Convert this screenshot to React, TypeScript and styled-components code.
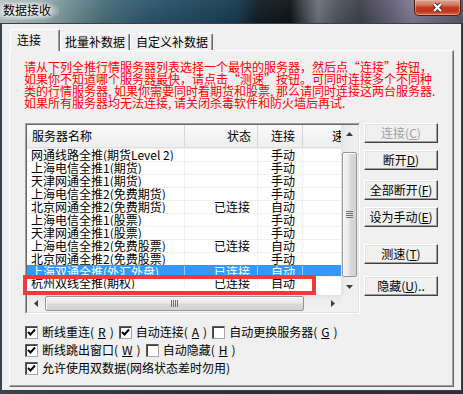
import React from 'react';
import styled, { createGlobalStyle } from 'styled-components';

const FONT = `"Noto Sans CJK SC", "Noto Sans", "Liberation Sans", sans-serif`;

const GlobalStyle = createGlobalStyle`
  html, body { margin: 0; padding: 0; }
  body { background: #27323b; font-family: ${FONT}; font-size: 12px; overflow: hidden; }
  *, *::before, *::after { box-sizing: border-box; }
`;

const Window = styled.div`
  width: 463px;
  height: 394px;
  display: flex;
  flex-direction: column;
  background: linear-gradient(90deg, #3a4650 0%, #27323b 40%, #2c2f38 100%);
`;

const TitleBar = styled.div`
  flex: 0 0 23px;
  display: flex;
  justify-content: space-between;
  align-items: flex-start;
  background:
    linear-gradient(180deg, rgba(255,255,255,0.06), rgba(0,0,0,0.06)),
    linear-gradient(90deg, #b3c0c0 0px, #9aafb0 40px, #6f8d92 70px, #456b78 105px, #2b536b 150px, #1d4459 200px, #163a50 235px, #101c25 258px, #0c1217 290px, #3a4149 303px, #6b7179 318px, #4c525a 338px, #3c3e48 360px, #66627a 395px, #7e7890 412px, #585466 463px);
`;

const Title = styled.div`
  margin-top: 2px;
  padding: 1px 8px 3px 3px;
  line-height: 14px;
  font-size: 12px;
  color: #000;
  background: radial-gradient(ellipse at 40% 50%, rgba(226,232,232,0.95) 0%, rgba(210,220,220,0.6) 55%, rgba(200,210,210,0) 80%);
  text-shadow: 0 0 3px #fff, 0 0 6px rgba(255,255,255,0.9);
`;

const CloseButton = styled.div`
  width: 47px;
  height: 16px;
  margin-right: 2px;
  border: 1px solid #4a1d15;
  border-top: none;
  border-radius: 0 0 5px 5px;
  background: linear-gradient(180deg, #d9a697 0%, #d27d66 30%, #c33c20 50%, #bd3518 75%, #d8694a 100%);
  box-shadow: inset 0 0 0 1px rgba(255, 200, 190, 0.45);
  display: flex;
  align-items: center;
  justify-content: center;
`;

const Client = styled.div`
  flex: 1;
  margin: 0 1px 3px 1px;
  border: 1px solid #3a4046;
  background: #f0f0f0;
  display: flex;
  flex-direction: column;
`;

const TabStrip = styled.div`
  flex: 0 0 26px;
  display: flex;
  align-items: flex-end;
  padding-left: 8px;
`;

const Tab = styled.div<{ $active?: boolean; $w: number; $pl: number }>`
  position: relative;
  z-index: 1;
  width: ${p => p.$w}px;
  height: ${p => (p.$active ? 22 : 17)}px;
  margin-bottom: ${p => (p.$active ? -1 : 0)}px;
  padding-left: ${p => p.$pl}px;
  padding-top: ${p => (p.$active ? 3 : 1)}px;
  background: #f0f0f0;
  border-top: 1px solid #fff;
  border-left: 1px solid #fff;
  border-right: 1px solid #696969;
  border-radius: 2px 2px 0 0;
  box-shadow: inset -1px 0 0 #a0a0a0;
  font-size: 12px;
  line-height: 14px;
  color: #000;
  white-space: nowrap;
`;

const Panel = styled.div`
  flex: 1;
  margin: 0 7px 3px 7px;
  border-top: 1px solid #fff;
  border-left: 1px solid #fff;
  border-right: 1px solid #696969;
  border-bottom: 1px solid #696969;
  box-shadow: inset -1px -1px 0 #a0a0a0;
  padding: 10px 0 0 14px;
  display: flex;
  flex-direction: column;
`;

const Notice = styled.div`
  color: #ff0000;
  font-size: 12px;
  line-height: 12px;
  white-space: nowrap;
`;

const ListArea = styled.div`
  margin-top: 14px;
  padding-left: 1px;
  display: flex;
  gap: 4px;
  align-items: flex-start;
`;

const ListWrap = styled.div`
  position: relative;
  width: 335px;
  height: 191px;
`;

const ListOuter = styled.div`
  width: 100%;
  height: 100%;
  border: 1px solid;
  border-color: #a0a0a0 #ffffff #ffffff #a0a0a0;
`;

const ListInner = styled.div`
  width: 100%;
  height: 100%;
  border: 1px solid;
  border-color: #696969 #e3e3e3 #e3e3e3 #696969;
  background: #fff;
  display: grid;
  grid-template-columns: 1fr 17px;
  grid-template-rows: 1fr 17px;
`;

const Content = styled.div`
  overflow: hidden;
  background: #fff;
`;

const COLS = '158px 73px 45px 60px';

const HeaderRow = styled.div`
  display: grid;
  grid-template-columns: ${COLS};
  height: 23px;
  background: linear-gradient(180deg, #fbfbfb 0%, #f3f3f3 50%, #eeeeee 100%);
  border-bottom: 1px solid #e0e0e0;
`;

const HeadCell = styled.div<{ $align: 'left' | 'right'; $pad: number }>`
  border-right: 1px solid #d6d6d6;
  display: flex;
  align-items: center;
  justify-content: ${p => (p.$align === 'right' ? 'flex-end' : 'flex-start')};
  padding: ${p => (p.$align === 'right' ? `0 ${p.$pad}px 0 0` : `0 0 0 ${p.$pad}px`)};
  font-size: 12px;
  line-height: 12px;
  color: #000;
  white-space: nowrap;
`;

const Row = styled.div<{ $selected?: boolean; $h: number }>`
  display: grid;
  grid-template-columns: ${COLS};
  height: ${p => p.$h}px;
  overflow: hidden;
  border-top: 1px solid ${p => (p.$selected ? '#3399ff' : '#f0f0f0')};
  background: ${p => (p.$selected ? '#3399ff' : '#fff')};
  color: ${p => (p.$selected ? '#fff' : '#000')};
`;

const Cell = styled.div<{ $align: 'left' | 'right'; $pad: number; $sel?: boolean }>`
  border-right: 1px solid ${p => (p.$sel ? '#9fcbff' : '#f0f0f0')};
  text-align: ${p => p.$align};
  padding: ${p => (p.$align === 'right' ? `0 ${p.$pad}px 0 0` : `0 0 0 ${p.$pad}px`)};
  font-size: 12px;
  line-height: 12px;
  white-space: nowrap;
`;

const VScroll = styled.div`
  display: flex;
  flex-direction: column;
  background: linear-gradient(90deg, #e2e2e2 0%, #ececec 25%, #f1f1f1 100%);
`;

const HScroll = styled.div`
  display: flex;
  background: linear-gradient(180deg, #e2e2e2 0%, #ececec 25%, #f1f1f1 100%);
`;

const Corner = styled.div`
  background: #f0f0f0;
`;

const ArrowBtn = styled.div`
  flex: 0 0 17px;
  width: 17px;
  height: 17px;
  display: flex;
  align-items: center;
  justify-content: center;
`;

const VTrack = styled.div`
  flex: 1;
  padding-top: 10px;
`;

const HTrack = styled.div`
  flex: 1;
  padding-left: 1px;
`;

const VThumb = styled.div`
  height: 125px;
  margin: 0 1px 0 1px;
  border: 1px solid #959595;
  border-radius: 2px;
  background: linear-gradient(90deg, #f4f4f4 0%, #eaeaea 45%, #d9d9d9 55%, #d3d3d3 100%);
  box-shadow: inset 1px 1px 0 #fbfbfb;
  display: flex;
  align-items: center;
  justify-content: center;
`;

const HThumb = styled.div`
  width: 259px;
  height: 15px;
  margin-top: 1px;
  border: 1px solid #959595;
  border-radius: 2px;
  background: linear-gradient(180deg, #f4f4f4 0%, #eaeaea 45%, #d9d9d9 55%, #d3d3d3 100%);
  box-shadow: inset 1px 1px 0 #fbfbfb;
  display: flex;
  align-items: center;
  justify-content: center;
`;

const RedMark = styled.div`
  position: absolute;
  left: -2px;
  top: 152px;
  width: 293px;
  height: 20px;
  border: 4px solid #f03a3a;
  z-index: 2;
`;

const SideButtons = styled.div`
  display: flex;
  flex-direction: column;
  width: 74px;
`;

const Btn = styled.button<{ $mt: number; $disabled?: boolean }>`
  margin-top: ${p => p.$mt}px;
  height: 20px;
  width: 74px;
  padding: 0;
  display: flex;
  align-items: center;
  justify-content: center;
  background: #f0f0f0;
  border: 1px solid;
  border-color: #ffffff #404040 #404040 #ffffff;
  box-shadow: inset -1px -1px 0 #a0a0a0, inset 1px 1px 0 #e3e3e3;
  color: ${p => (p.$disabled ? '#a0a0a0' : '#000')};
  font-family: ${FONT};
  font-size: 12px;
  line-height: 12px;
  white-space: nowrap;
`;

const CheckGroup = styled.div`
  margin-top: 9px;
  padding-left: 1px;
  display: flex;
  flex-direction: column;
`;

const CheckRow = styled.div`
  display: flex;
  align-items: center;
  height: 18px;
`;

const CheckItem = styled.label`
  display: inline-flex;
  align-items: center;
  gap: 4px;
  margin-right: 5px;
  font-size: 12px;
  line-height: 12px;
  white-space: nowrap;
  color: #000;
`;

const Box = styled.span`
  width: 13px;
  height: 13px;
  border: 1px solid;
  border-color: #5a5a5a #a8a8a8 #a8a8a8 #5a5a5a;
  box-shadow: inset 1px 1px 0 #404040;
  background: #fff;
  display: inline-flex;
  align-items: center;
  justify-content: center;
`;

const U = styled.span`
  text-decoration: underline;
`;

const Check = ({ on }: { on: boolean }) => (
  <Box>
    {on && (
      <svg width="9" height="9" viewBox="0 0 9 9">
        <polyline points="1,4 3.5,6.5 8,1.5" fill="none" stroke="#000" strokeWidth="2" />
      </svg>
    )}
  </Box>
);

const ArrowUp = () => (
  <svg width="7" height="4" viewBox="0 0 7 4"><polygon points="0,4 3.5,0 7,4" fill="#3d3d3d" /></svg>
);
const ArrowDown = () => (
  <svg width="7" height="4" viewBox="0 0 7 4"><polygon points="0,0 7,0 3.5,4" fill="#3d3d3d" /></svg>
);
const ArrowLeft = () => (
  <svg width="4" height="7" viewBox="0 0 4 7"><polygon points="4,0 4,7 0,3.5" fill="#3d3d3d" /></svg>
);
const ArrowRight = () => (
  <svg width="4" height="7" viewBox="0 0 4 7"><polygon points="0,0 0,7 4,3.5" fill="#3d3d3d" /></svg>
);
const GripH = () => (
  <svg width="7" height="7" viewBox="0 0 7 7">
    {[0, 2, 4, 6].map(y => (
      <line key={y} x1="0" x2="7" y1={y + 0.5} y2={y + 0.5} stroke="#6e6e6e" strokeWidth="1" />
    ))}
  </svg>
);
const GripV = () => (
  <svg width="7" height="7" viewBox="0 0 7 7">
    {[0, 2, 4, 6].map(x => (
      <line key={x} y1="0" y2="7" x1={x + 0.5} x2={x + 0.5} stroke="#6e6e6e" strokeWidth="1" />
    ))}
  </svg>
);

type Server = { name: string; status: string; mode: string; selected?: boolean; h?: number };

const servers: Server[] = [
  { name: '网通线路全推(期货Level 2)', status: '', mode: '手动' },
  { name: '上海电信全推1(期货)', status: '', mode: '手动' },
  { name: '天津网通全推1(期货)', status: '', mode: '手动' },
  { name: '上海电信全推2(免费期货)', status: '', mode: '手动' },
  { name: '北京网通全推2(免费期货)', status: '已连接', mode: '自动' },
  { name: '上海电信全推1(股票)', status: '', mode: '手动' },
  { name: '天津网通全推1(股票)', status: '', mode: '手动' },
  { name: '上海电信全推2(免费股票)', status: '已连接', mode: '自动' },
  { name: '北京网通全推2(免费股票)', status: '', mode: '手动' },
  { name: '上海双通全推(外汇外盘)', status: '已连接', mode: '自动', selected: true, h: 11 },
  { name: '杭州双线全推(期权)', status: '已连接', mode: '自动' },
];

export default function App() {
  return (
    <>
      <GlobalStyle />
      <Window>
        <TitleBar>
          <Title>数据接收</Title>
          <CloseButton>
            <svg width="13" height="11" viewBox="0 0 13 11">
              <path d="M3 2 L10 9 M10 2 L3 9" stroke="#5a2a22" strokeWidth="4" />
              <path d="M3 2 L10 9 M10 2 L3 9" stroke="#ffffff" strokeWidth="2.2" />
            </svg>
          </CloseButton>
        </TitleBar>
        <Client>
          <TabStrip>
            <Tab $active $w={50} $pl={6}>连接</Tab>
            <Tab $w={70} $pl={4}>批量补数据</Tab>
            <Tab $w={83} $pl={5}>自定义补数据</Tab>
          </TabStrip>
          <Panel>
            <Notice>
              <div>请从下列全推行情服务器列表选择一个最快的服务器，然后点“连接”按钮，</div>
              <div>如果你不知道哪个服务器最快，请点击“测速”按钮。可同时连接多个不同种</div>
              <div>类的行情服务器, 如果你需要同时看期货和股票, 那么请同时连接这两台服务器.</div>
              <div>如果所有服务器均无法连接, 请关闭杀毒软件和防火墙后再试.</div>
            </Notice>
            <ListArea>
              <ListWrap>
                <ListOuter>
                  <ListInner>
                    <Content>
                      <HeaderRow>
                        <HeadCell $align="left" $pad={5}>服务器名称</HeadCell>
                        <HeadCell $align="right" $pad={6}>状态</HeadCell>
                        <HeadCell $align="left" $pad={13}>连接</HeadCell>
                        <HeadCell $align="right" $pad={6}>速度</HeadCell>
                      </HeaderRow>
                      {servers.map(s => (
                        <Row key={s.name} $selected={s.selected} $h={s.h ?? 13}>
                          <Cell $align="left" $pad={4} $sel={s.selected}>{s.name}</Cell>
                          <Cell $align="right" $pad={7} $sel={s.selected}>{s.status}</Cell>
                          <Cell $align="left" $pad={13} $sel={s.selected}>{s.mode}</Cell>
                          <Cell $align="right" $pad={6} $sel={s.selected}></Cell>
                        </Row>
                      ))}
                    </Content>
                    <VScroll>
                      <ArrowBtn><ArrowUp /></ArrowBtn>
                      <VTrack>
                        <VThumb><GripH /></VThumb>
                      </VTrack>
                      <ArrowBtn><ArrowDown /></ArrowBtn>
                    </VScroll>
                    <HScroll>
                      <ArrowBtn><ArrowLeft /></ArrowBtn>
                      <HTrack>
                        <HThumb><GripV /></HThumb>
                      </HTrack>
                      <ArrowBtn><ArrowRight /></ArrowBtn>
                    </HScroll>
                    <Corner />
                  </ListInner>
                </ListOuter>
                <RedMark />
              </ListWrap>
              <SideButtons>
                <Btn $mt={0} $disabled>连接(<U>C</U>)</Btn>
                <Btn $mt={7}>断开<U>D</U>)</Btn>
                <Btn $mt={10}>全部断开(<U>F</U>)</Btn>
                <Btn $mt={7}>设为手动(<U>E</U>)</Btn>
                <Btn $mt={17}>测速(<U>T</U>)</Btn>
                <Btn $mt={12}>隐藏(<U>U</U>)..</Btn>
              </SideButtons>
            </ListArea>
            <CheckGroup>
              <CheckRow>
                <CheckItem><Check on />断线重连(<U>R</U>)</CheckItem>
                <CheckItem><Check on />自动连接(<U>A</U>)</CheckItem>
                <CheckItem><Check on={false} />自动更换服务器(<U>G</U>)</CheckItem>
              </CheckRow>
              <CheckRow>
                <CheckItem><Check on />断线跳出窗口(<U>W</U>)</CheckItem>
                <CheckItem><Check on={false} />自动隐藏(<U>H</U>)</CheckItem>
              </CheckRow>
              <CheckRow>
                <CheckItem><Check on />允许使用双数据(网络状态差时勿用)</CheckItem>
              </CheckRow>
            </CheckGroup>
          </Panel>
        </Client>
      </Window>
    </>
  );
}
